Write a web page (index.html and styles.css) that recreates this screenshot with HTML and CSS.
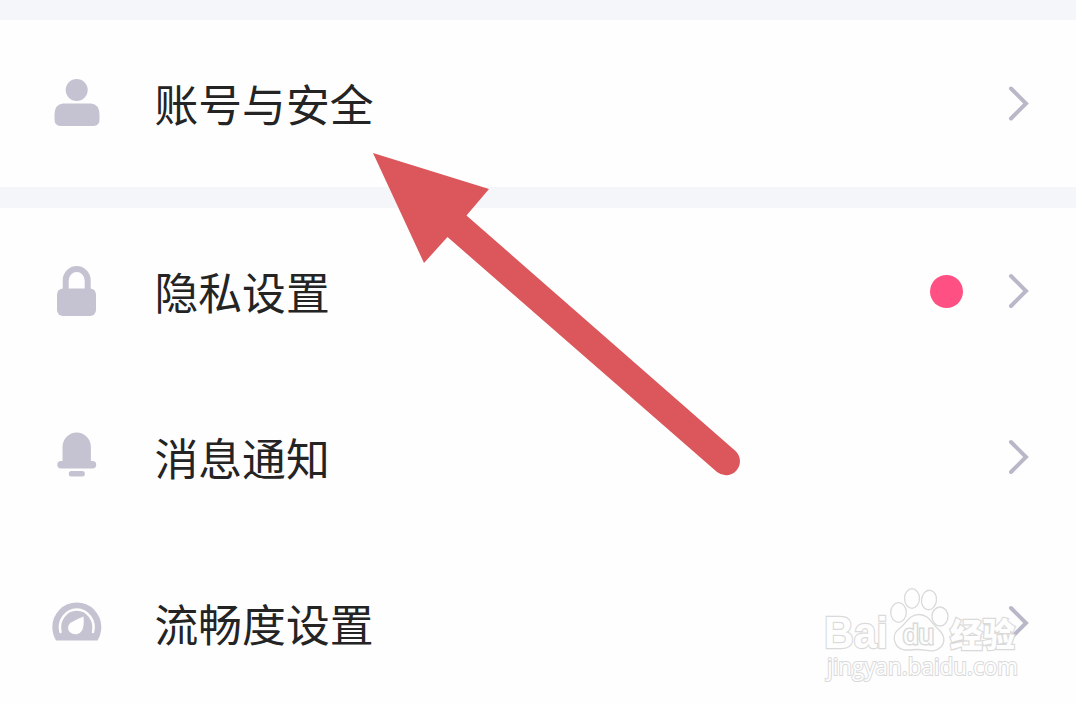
FILE: index.html
```
<!DOCTYPE html>
<html lang="zh-CN">
  <head>
    <meta charset="UTF-8" />
    <meta name="viewport" content="width=device-width, initial-scale=1.0" />
    <title>设置</title>
    <link rel="stylesheet" href="styles.css">
  </head>
  <body>
    <main class="settings">
      <section class="group">
        <div class="row row-account">
          <svg class="row-icon" viewBox="0 0 50 54">
            <circle cx="24.7" cy="13" r="11" />
            <path d="M11 26.500h28q8.500 1 8.500 11v5q0 6.500-6 6.500h-33q-6 0-6-6.500v-5q0-10 8.500-11z" />
          </svg>
          <span class="row-title">账号与安全</span>
          <svg class="chevron" viewBox="0 0 22 36"><path d="M3 2.500l15 15l-15 15" /></svg>
        </div>
      </section>

      <section class="group">
        <div class="row">
          <svg class="row-icon" viewBox="0 0 50 54">
            <path class="line" d="M13.700 27V16.500a11 11.500 0 0 1 22 0V27" />
            <rect x="5" y="24.500" width="39" height="27.500" rx="6" />
          </svg>
          <span class="row-title">隐私设置</span>
          <span class="dot"></span>
          <svg class="chevron" viewBox="0 0 22 36"><path d="M3 3l15 15l-15 15" /></svg>
        </div>
        <div class="row">
          <svg class="row-icon" viewBox="0 0 50 54">
            <path d="M10.500 31V17a14.200 14.500 0 0 1 28.400 0V31h1.600a3.700 3.700 0 0 1 0 7.400H9a3.700 3.700 0 0 1 0-7.400z" />
            <rect x="16.800" y="41" width="16" height="5.500" rx="2.500" />
          </svg>
          <span class="row-title">消息通知</span>
          <svg class="chevron" viewBox="0 0 22 36"><path d="M3 3l15 15l-15 15" /></svg>
        </div>
        <div class="row">
          <svg class="row-icon" viewBox="0 0 50 54">
            <path d="M4 44.500Q.300 38 .300 31a24.500 24.500 0 0 1 49 0q0 7-3.700 13.500z" />
            <path class="gauge-arc" d="M8.500 36a16.800 18 0 1 1 32.500 0" />
            <path class="gauge-needle" d="M31.500 20.500q1 9-1.500 14a7.300 6.500 0 1 1-10-8.500q5-3 11.500-5.500z" />
          </svg>
          <span class="row-title">流畅度设置</span>
          <svg class="chevron" viewBox="0 0 22 36"><path d="M3 3l15 15l-15 15" /></svg>
        </div>
      </section>
    </main>

    <!-- red pointer -->
    <svg class="pointer" viewBox="0 0 370 326">
      <path d="M1 1L117 37L94.500 63.500L363.500 299A14 14 0 0 1 345 320L75.500 85L52 111z" />
    </svg>

    <!-- watermark -->
    <svg class="watermark" viewBox="0 0 210 100">
      <text class="mark-bai" x="4" y="62" textLength="64" lengthAdjust="spacingAndGlyphs">Bai</text>
      <ellipse cx="78.500" cy="26.500" rx="7.800" ry="9.800" />
      <ellipse cx="92" cy="12.500" rx="7.500" ry="9.800" />
      <ellipse cx="109" cy="14" rx="7.500" ry="9.800" transform="rotate(8 109 14)" />
      <ellipse cx="120" cy="30.500" rx="8" ry="9.500" />
      <path d="M99 28.500C89 28.500 86 38 80 42C73 47 73 54 77 60C82 66 90 63.500 98 63.500C106 63.500 114 68 121 61C126 55 124 48 118 43C112 38 109 28.500 99 28.500z" />
      <text class="mark-du" x="83" y="57.500" textLength="31" lengthAdjust="spacingAndGlyphs">du</text>
      <text class="mark-cn" x="130" y="61" textLength="65" lengthAdjust="spacingAndGlyphs">经验</text>
      <text class="mark-url" x="7" y="89" textLength="191" lengthAdjust="spacingAndGlyphs">jingyan.baidu.com</text>
    </svg>
  </body>
</html>
```
FILE: styles.css
```
/* resets */
* {
  padding: 0;
  margin: 0;
  box-sizing: border-box;
}
body {
  font-family: "Noto Sans CJK SC", sans-serif;
  background-color: #f5f6fa;
  color: #242424;
  height: 704px;
  overflow: hidden;
}

.settings {
  display: flex;
  flex-direction: column;
  gap: 21px;
  padding-top: 20px;
}
.group {
  background-color: #fefefe;
}

/* rows */
.row {
  display: flex;
  align-items: center;
  height: 166px;
  padding: 0 46px 0 52px;
}
.row-account {
  height: 167px;
}
.row-icon {
  width: 50px;
  height: 54px;
  fill: #c5c3d1;
}
.row-icon .line {
  fill: none;
  stroke: #c5c3d1;
  stroke-width: 6;
}
.row-icon .gauge-arc {
  fill: none;
  stroke: #fefefe;
  stroke-width: 2.5;
  stroke-linecap: round;
}
.row-icon .gauge-needle {
  fill: #fefefe;
}
.row-title {
  flex: 1;
  margin-left: 52.5px;
  font-size: 43.8px;
  line-height: 64px;
}
.row-account .row-title {
  position: relative;
  top: -1px;
}
.dot {
  width: 33px;
  height: 33px;
  margin-right: 45px;
  border-radius: 50%;
  background-color: #ff5084;
}
.chevron {
  width: 22px;
  height: 36px;
  fill: none;
  stroke: #b9b8c9;
  stroke-width: 4;
  stroke-linecap: round;
}

/* overlays */
.pointer {
  position: absolute;
  top: 152px;
  left: 372px;
  width: 370px;
  height: 326px;
  fill: #db575b;
}
.watermark {
  position: absolute;
  top: 586px;
  left: 820px;
  width: 210px;
  height: 100px;
  fill: #fefefe;
  stroke: #dadada;
  stroke-width: 1.3;
}
.watermark text {
  font-family: "Liberation Sans", "Noto Sans CJK SC", sans-serif;
  paint-order: stroke;
  stroke-width: 2.4;
}
.mark-bai {
  font-size: 45px;
  font-weight: 700;
}
.watermark .mark-du {
  font-size: 27px;
  stroke-width: 3;
}
.mark-cn {
  font-size: 33px;
  font-weight: 900;
}
.watermark .mark-url {
  font-family: "Open Sans", sans-serif;
  font-size: 23px;
  stroke-width: 2;
}
```
